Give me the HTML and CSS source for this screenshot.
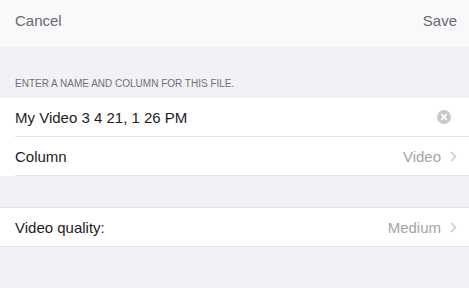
FILE: index.html
```html
<!DOCTYPE html>
<html>
<head>
<meta charset="utf-8">
<link rel="stylesheet" href="styles.css">
</head>
<body>
<div class="screen">
  <header class="navbar">
    <span class="nav-btn">Cancel</span>
    <span class="nav-btn">Save</span>
  </header>
  <div class="section-label">ENTER A NAME AND COLUMN FOR THIS FILE.</div>
  <div class="group">
    <div class="row">
      <div class="row-inner">
        <span class="row-title">My Video 3 4 21, 1 26 PM</span>
        <span class="clear-btn"><svg width="14" height="14" viewBox="0 0 14 14"><circle cx="7" cy="7" r="7" fill="#c8c8cc"/><path d="M4.6 4.6 L9.4 9.4 M9.4 4.6 L4.6 9.4" stroke="#fff" stroke-width="1.5" stroke-linecap="round"/></svg></span>
      </div>
    </div>
    <div class="row">
      <div class="row-inner">
        <span class="row-title">Column</span>
        <span class="row-value">Video<svg class="chev" width="7" height="11" viewBox="0 0 7 11"><path d="M1 1 L5.5 5.5 L1 10" fill="none" stroke="#c4c4c8" stroke-width="1.3"/></svg></span>
      </div>
    </div>
  </div>
  <div class="group group-2">
    <div class="row single">
      <div class="row-inner">
        <span class="row-title">Video quality:</span>
        <span class="row-value">Medium<svg class="chev" width="7" height="11" viewBox="0 0 7 11"><path d="M1 1 L5.5 5.5 L1 10" fill="none" stroke="#c4c4c8" stroke-width="1.3"/></svg></span>
      </div>
    </div>
  </div>
</div>
</body>
</html>
```
FILE: styles.css
```css
html, body {
  margin: 0;
  padding: 0;
  background: #f1f1f6;
}
.screen {
  width: 469px;
  height: 288px;
  font-family: "Liberation Sans", Arial, sans-serif;
  background: #f1f1f6;
  overflow: hidden;
}
.navbar {
  height: 44px;
  background: #f9f9fb;
  border-bottom: 2px solid #fdfdfe;
  display: flex;
  justify-content: space-between;
  align-items: center;
  padding: 0 12px 0 15px;
  box-sizing: content-box;
}
.nav-btn {
  font-size: 15px;
  color: #68686c;
  padding-bottom: 3px;
}
.section-label {
  font-size: 10px;
  color: #707075;
  padding: 32px 15px 0;
  height: 20px;
  letter-spacing: 0;
}
.group {
  background: #fff;
}
.row {
  height: 39px;
  padding-left: 15px;
}
.row-inner {
  height: 38px;
  display: flex;
  align-items: center;
  justify-content: space-between;
  padding-right: 12px;
  border-bottom: 1px solid #e3e3e7;
}
.row-title {
  font-size: 15px;
  color: #1c1c1e;
}
.row-value {
  font-size: 15px;
  color: #a4a4a8;
  display: flex;
  align-items: center;
}
.chev {
  margin-left: 9px;
}
.clear-btn {
  display: flex;
  margin-right: 6px;
}
.group-2 {
  margin-top: 31px;
  border-top: 1px solid #e3e3e7;
  border-bottom: 1px solid #e3e3e7;
}
.row.single {
  height: 38px;
}
.row.single .row-inner {
  border-bottom: none;
}
```
